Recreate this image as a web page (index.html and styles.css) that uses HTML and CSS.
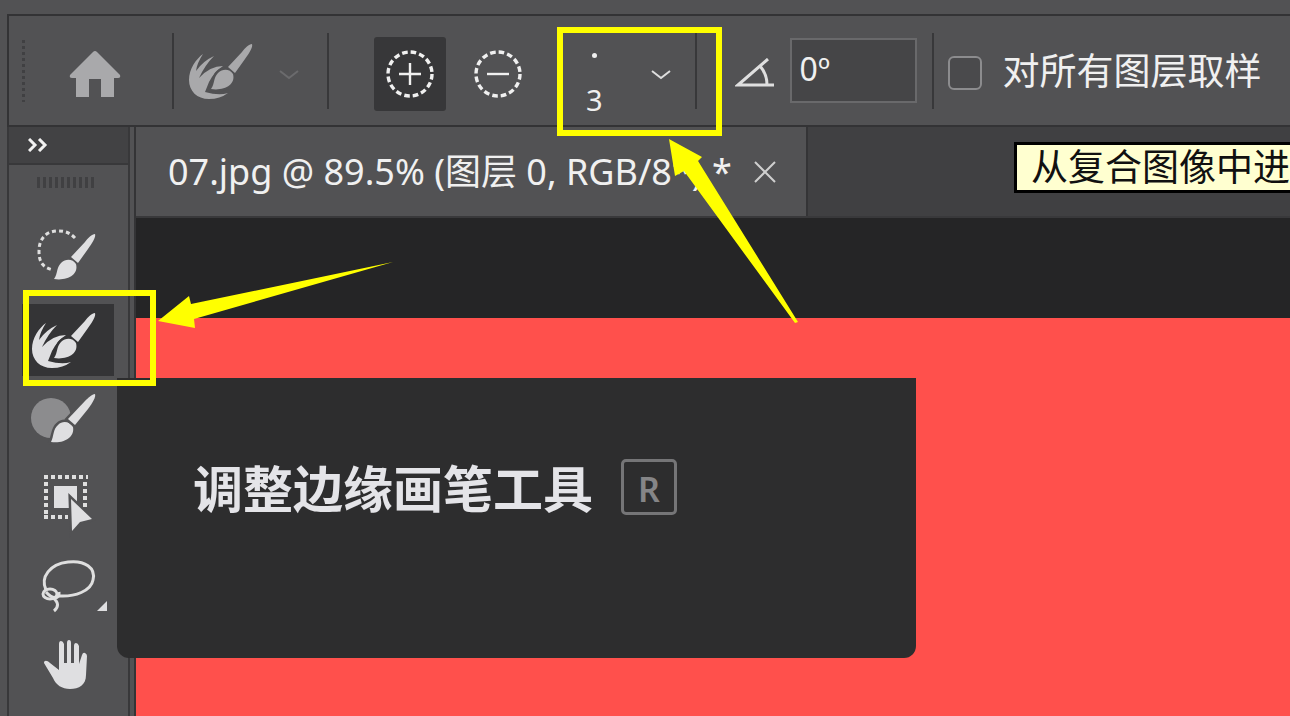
FILE: index.html
```html
<!DOCTYPE html>
<html lang="zh-CN">
<head>
    <meta charset="UTF-8">
    <meta name="viewport" content="width=device-width, initial-scale=1.0">
    <title>07.jpg</title>
    <link rel="stylesheet" href="styles.css">
</head>
<body>
    <div class="app">
        <header class="options">
            <div class="grip"></div>
            <button class="home" aria-label="主页">
                <svg width="52" height="48" viewBox="0 0 52 48"><path d="M24 2Q26 0 28 2L51 25Q52 28 49 28H45V47H32V29H20V47H7V28H3Q0 28 1 25Z" fill="#a9a9ab"/></svg>
            </button>
            <div class="sep"></div>
            <button class="preset" aria-label="调整边缘画笔工具">
                <svg width="92" height="72" viewBox="0 0 92 72" fill="#a9a9ab">
                    <path d="M24 19Q18 28 17 36Q24 26 35 21Q26 30 20 43Q31 31 44 31Q35 37 30 47L26 57Q40 61 49 58Q41 64 30 64C18 64 10 56 10 45C10 34 17 24 24 19Z"/>
                    <path class="bristle" d="M32 54C36 49 34 43 39 38C44 33 51 34 54 39C57 50 45 56 32 54Z"/>
                    <path d="M73 9C70 9 66 13 63 17L49 32L56 38L66 24C71 17 74 12 73 9Z"/>
                </svg>
                <svg class="arrow-down" width="20" height="10" viewBox="0 0 20 10"><path d="M1 1L10 8L19 1" fill="none" stroke="#6b6b6d" stroke-width="2"/></svg>
            </button>
            <div class="sep"></div>
            <div class="modes">
                <button class="mode active" aria-label="扩展检测区域">
                    <svg width="50" height="50" viewBox="0 0 50 50" fill="none" stroke="#f0f0f0"><circle cx="25" cy="25" r="22" stroke-width="3.4" stroke-dasharray="5.6 3.04"/><path d="M14 25H36M25 14V36" stroke-width="2.4"/></svg>
                </button>
                <button class="mode" aria-label="恢复原始边缘">
                    <svg width="50" height="50" viewBox="0 0 50 50" fill="none" stroke="#f0f0f0"><circle cx="25" cy="25" r="22" stroke-width="3.4" stroke-dasharray="5.6 3.04"/><path d="M14 25H36" stroke-width="2.4"/></svg>
                </button>
            </div>
            <button class="size" aria-label="画笔大小">
                <span class="size-value"><i class="dot"></i>3</span>
                <svg width="20" height="10" viewBox="0 0 20 10"><path d="M1 1L10 8L19 1" fill="none" stroke="#dedede" stroke-width="2"/></svg>
            </button>
            <div class="sep"></div>
            <label class="angle" for="angle" aria-label="角度">
                <svg width="40" height="30" viewBox="0 0 40 30" fill="none" stroke="#dfdfdf" stroke-width="3"><path d="M33 1L3 27H39M25 8Q32 16 32 27"/></svg>
            </label>
            <input class="angle-input" id="angle" type="text" value="0º">
            <div class="sep"></div>
            <input class="check" id="sample" type="checkbox">
            <label class="check-label" for="sample">对所有图层取样</label>
        </header>

        <div class="main">
            <aside class="tools">
                <div class="tools-head">
                    <button class="expand" aria-label="展开">
                        <svg width="20" height="14" viewBox="0 0 20 14" fill="none" stroke="#f2f2f2" stroke-width="3"><path d="M1 1L7 7L1 13M11 1L17 7L11 13"/></svg>
                    </button>
                </div>
                <div class="tools-grip"></div>
                <div class="tool-list">
                    <button class="tool" aria-label="快速选择工具">
                        <svg width="92" height="72" viewBox="0 0 92 72">
                            <path d="M53 16C48 11 44 9 36 9C23 9 17 18 17 29C17 40 20 45 31 48" fill="none" stroke="#dfdfdf" stroke-width="3" stroke-dasharray="4 3"/>
                            <path class="bristle" d="M32 57C36 52 34 46 39 41C44 36 51 37 54 42C57 53 45 59 32 57Z"/>
                            <path d="M73 12C70 12 66 16 63 20L49 35L56 41L66 27C71 20 74 15 73 12Z"/>
                        </svg>
                    </button>
                    <button class="tool selected" aria-label="调整边缘画笔工具">
                        <svg width="92" height="72" viewBox="0 0 92 72">
                            <path d="M24 19Q18 28 17 36Q24 26 35 21Q26 30 20 43Q31 31 44 31Q35 37 30 47L26 57Q40 61 49 58Q41 64 30 64C18 64 10 56 10 45C10 34 17 24 24 19Z"/>
                            <path class="bristle" d="M32 54C36 49 34 43 39 38C44 33 51 34 54 39C57 50 45 56 32 54Z"/>
                            <path d="M73 9C70 9 66 13 63 17L49 32L56 38L66 24C71 17 74 12 73 9Z"/>
                        </svg>
                    </button>
                    <button class="tool" aria-label="画笔工具">
                        <svg width="92" height="72" viewBox="0 0 92 72">
                            <circle cx="29" cy="32" r="20" fill="#8c8c8e"/>
                            <path class="bristle" d="M29 56C32 50 31 43 36 39C41 34 48 36 51 41C53 51 42 58 29 56Z"/>
                            <path class="bristle" d="M73 8C70 8 66 12 63 15L46 33L53 39L66 23C71 16 74 11 73 8Z"/>
                        </svg>
                    </button>
                    <button class="tool" aria-label="对象选择工具">
                        <svg width="92" height="72" viewBox="0 0 92 72">
                            <path d="M22 9H66M22 49H46M24 14V47M63 14V40" fill="none" stroke="#dfdfdf" stroke-width="4" stroke-dasharray="4 3"/>
                            <path d="M32 18H55V40H32Z"/>
                            <path class="bristle" d="M49 31L70 51L58 54L50 63Z"/>
                        </svg>
                    </button>
                    <button class="tool" aria-label="套索工具">
                        <svg width="92" height="72" viewBox="0 0 92 72">
                            <g fill="none" stroke="#dfdfdf" stroke-width="3">
                                <path d="M24 40C18 27 28 14 46 12C63 10 74 18 71 30C69 41 53 47 37 46"/>
                                <ellipse cx="28" cy="44" rx="7" ry="5"/>
                                <path d="M24 42C30 49 38 50 37 42M30 47C37 52 37 57 32 61"/>
                            </g>
                            <path d="M85 51V61H75Z"/>
                        </svg>
                    </button>
                    <button class="tool" aria-label="抓手工具">
                        <svg width="92" height="72" viewBox="0 0 92 72">
                            <path d="M22 31C22 28 25 28 28 31L37 38V12Q37 9 39 9T42 12V31H45V11Q45 8 47 8T49 11V31H52V14Q52 11 54 11T57 14V32L60 23Q61 20 63 21T65 24L64 43C64 53 57 57 48 57C40 57 34 53 31 46Z"/>
                        </svg>
                    </button>
                </div>
            </aside>

            <section class="document">
                <nav class="tabs">
                    <div class="tab">
                        <span class="tab-name">07.jpg @ 89.5% (图层 0, RGB/8*) *</span>
                        <button class="close" aria-label="关闭">
                            <svg width="22" height="22" viewBox="0 0 22 22"><path d="M1 1L21 21M21 1L1 21" stroke="#cfcfcf" stroke-width="2"/></svg>
                        </button>
                    </div>
                </nav>
                <div class="canvas"></div>
            </section>
        </div>

        <div class="hint">从复合图像中进</div>
        <div class="popover">
            <span class="popover-title">调整边缘画笔工具</span>
            <kbd class="key">R</kbd>
        </div>

        <!-- markers over the size picker and the active tool -->
        <div class="marker marker-size"></div>
        <div class="marker marker-tool"></div>
        <svg class="pointers" width="800" height="330" viewBox="0 0 800 330" fill="#ffff00">
            <path d="M669 139L702 157L698 161L798 322L795 323L684 171L675 176Z"/>
            <path d="M158 321L189 296L191 304L393 262L194 319L195 328Z"/>
        </svg>
    </div>
</body>
</html>
```
FILE: styles.css
```css
* {
    box-sizing: border-box;
}

body {
    margin: 0;
    background: #525254;
    color: #f0f0f0;
    font-family: "Noto Sans", "Noto Sans CJK SC", sans-serif;
}

button {
    display: flex;
    align-items: center;
    padding: 0;
    border: none;
    background: none;
    color: inherit;
    font: inherit;
    cursor: pointer;
}

svg {
    display: block;
    flex: none;
}

.app {
    position: relative;
    display: flex;
    flex-direction: column;
    height: 100vh;
    padding: 14px 0 0 7px;
    overflow: hidden;
}

/* options bar */
.options {
    display: flex;
    flex: none;
    align-items: center;
    height: 113px;
    border: 2px solid #333335;
    border-right: none;
    white-space: nowrap;
}

.grip {
    width: 3px;
    height: 62px;
    margin-left: 13px;
    background: repeating-linear-gradient(#404042 0 3px, transparent 3px 6px);
}

.home {
    margin: 6px 51px 0 44px;
}

.sep {
    flex: none;
    width: 2px;
    height: 76px;
    background: #38383a;
}

.preset {
    margin-right: 28px;
    margin-left: 5px;
}

.preset .arrow-down {
    margin: 8px 0 0 8px;
}

.modes {
    display: flex;
    gap: 16px;
    margin: 6px 36px 0 45px;
}

.mode {
    justify-content: center;
    width: 72px;
    height: 74px;
    border-radius: 3px;
}

.active {
    background: #373739;
}

.size {
    gap: 48px;
    height: 90px;
    margin-top: 9px;
    padding: 0 24px 0 16px;
}

.size-value {
    display: flex;
    flex-direction: column;
    align-items: center;
    gap: 26px;
    font-size: 29px;
    line-height: 32px;
    padding-top: 18px;
}

.dot {
    width: 5px;
    height: 5px;
    border-radius: 50%;
    background: #f0f0f0;
}

.angle {
    margin: 4px 15px 0 38px;
}

.angle-input {
    width: 127px;
    height: 65px;
    margin-right: 15px;
    padding: 0 8px 4px;
    border: 2px solid #69696b;
    background: #454547;
    color: #f0f0f0;
    font-family: inherit;
    font-size: 32px;
}

.check {
    appearance: none;
    width: 34px;
    height: 34px;
    margin: 4px 21px 0 14px;
    border: 2px solid #8c8c8e;
    border-radius: 6px;
    background: #4a4a4c;
}

.check-label {
    font-size: 37px;
    line-height: 48px;
}

/* tools on the left, document on the right */
.main {
    display: flex;
    flex: 1;
    min-height: 0;
}

.tools {
    flex: none;
    width: 123px;
    border: 2px solid #38383a;
    border-top: none;
    border-bottom: none;
}

.tools-head {
    display: flex;
    height: 38px;
    padding-left: 19px;
    border-bottom: 2px solid #38383a;
    background: #424244;
}

.tools-grip {
    width: 60px;
    height: 11px;
    margin: 12px 0 34px 28px;
    background: repeating-linear-gradient(90deg, #404042 0 3px, transparent 3px 6px);
}

.tool-list {
    display: flex;
    flex-direction: column;
    gap: 10px;
    padding-left: 13px;
}

.tool {
    flex: none;
    width: 92px;
    height: 72px;
    fill: #dfdfe1;
}

.bristle {
    paint-order: stroke;
    stroke: #525254;
    stroke-width: 5px;
}

.selected {
    background: #343436;
}

.selected .bristle {
    stroke: #343436;
}

.document {
    display: flex;
    flex: 1;
    flex-direction: column;
    min-width: 0;
    margin-left: 4px;
    border-left: 2px solid #343436;
}

.tabs {
    display: flex;
    flex: none;
    height: 91px;
    border-bottom: 2px solid #39393b;
    background: #404042;
}

.tab {
    display: flex;
    align-items: center;
    gap: 22px;
    padding: 0 30px 0 32px;
    border-right: 2px solid #343436;
    background: #525254;
    white-space: nowrap;
}

.tab-name {
    font-size: 36px;
    line-height: 48px;
}

.canvas {
    flex: 1;
    border-top: 100px solid #252526;
    background: #ff504c;
}

/* floating things */
.hint {
    position: absolute;
    top: 142px;
    right: -20px;
    left: 1014px;
    height: 51px;
    padding-left: 14px;
    border: 3px solid #000;
    background: #ffffd0;
    color: #111;
    font-size: 37px;
    line-height: 44px;
    white-space: nowrap;
    overflow: hidden;
}

.popover {
    position: absolute;
    top: 378px;
    left: 117px;
    display: flex;
    align-items: flex-start;
    gap: 28px;
    width: 799px;
    height: 280px;
    padding: 81px 76px;
    border-radius: 0 0 12px 12px;
    background: #2d2d2e;
}

.popover-title {
    color: #e4e4e8;
    font-size: 50px;
    font-weight: 700;
    line-height: 60px;
}

.key {
    width: 56px;
    height: 56px;
    border: 3px solid #757577;
    border-radius: 5px;
    color: #858587;
    font-family: inherit;
    font-size: 34px;
    font-weight: 600;
    line-height: 54px;
    text-align: center;
}

.marker {
    position: absolute;
    border: 6px solid #ffff00;
}

.marker-size {
    top: 27px;
    left: 557px;
    width: 165px;
    height: 109px;
}

.marker-tool {
    top: 290px;
    left: 23px;
    width: 133px;
    height: 96px;
}

.pointers {
    position: absolute;
    top: 0;
    left: 0;
    pointer-events: none;
}
```
